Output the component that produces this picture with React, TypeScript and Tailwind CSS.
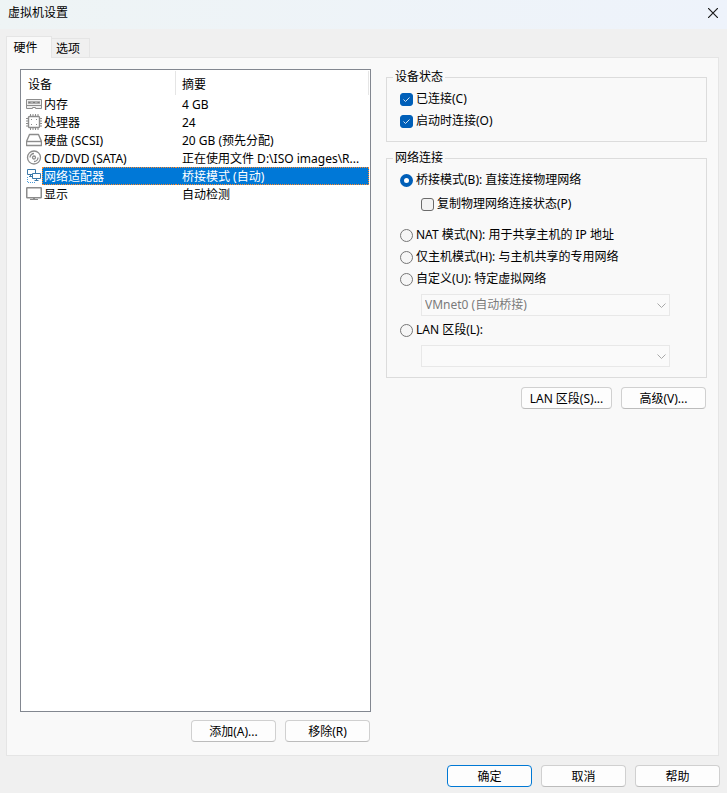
import { useState } from "react";
import type { ReactNode } from "react";

interface Device {
  id: string;
  name: string;
  summary: string;
  icon: ReactNode;
}

const ICON_PROPS = {
  width: 16,
  height: 16,
  viewBox: "0 0 16 16",
  fill: "none",
  stroke: "#8c8c8c",
  "aria-hidden": true,
} as const;

const DEVICES: Device[] = [
  {
    id: "memory",
    name: "内存",
    summary: "4 GB",
    icon: (
      <svg {...ICON_PROPS}>
        <path d="M.5 3.5h15v9H9.5v-1h-3v1h-6z" fill="#eeeeee" />
        <path d="M.5 9.5h15" />
        <path d="M2 5h12v3H2z" fill="#adadad" stroke="none" />
        <path d="M2.5 6.5h2M7 6.5h2M11.5 6.5h2" stroke="#7a7a7a" />
      </svg>
    ),
  },
  {
    id: "cpu",
    name: "处理器",
    summary: "24",
    icon: (
      <svg {...ICON_PROPS}>
        <rect x="2.5" y="2.5" width="11" height="11" rx="1" strokeWidth="1.4" />
        <path d="M4.5 0v2M7 0v2M9.5 0v2M12 0v2M4.5 14v2M7 14v2M9.5 14v2M12 14v2" />
        <path d="M0 4.5h2M0 7h2M0 9.5h2M0 12h2M14 4.5h2M14 7h2M14 9.5h2M14 12h2" />
        <path d="M5 5.5h1M10 5.5h1M10 10.5h1M5 10.5h1" />
      </svg>
    ),
  },
  {
    id: "disk",
    name: "硬盘 (SCSI)",
    summary: "20 GB (预先分配)",
    icon: (
      <svg {...ICON_PROPS} strokeWidth="1.4">
        <path d="M3.5 2.5h9l3 7v4H.5v-4z" strokeLinejoin="round" />
        <path d="M.5 9.5h15" />
      </svg>
    ),
  },
  {
    id: "cd",
    name: "CD/DVD (SATA)",
    summary: "正在使用文件 D:\\ISO images\\R...",
    icon: (
      <svg {...ICON_PROPS} strokeWidth="1.3">
        <circle cx="8" cy="7.5" r="6.5" />
        <circle cx="8" cy="7.5" r="1.5" />
        <path d="M4 7.5a4 4 0 0 1 4-4M12 7.5a4 4 0 0 1-4 4" />
      </svg>
    ),
  },
  {
    id: "network",
    name: "网络适配器",
    summary: "桥接模式 (自动)",
    icon: (
      <svg {...ICON_PROPS} stroke="#3b78a8">
        <path d="M1.5 1.5h8v5h-8zM4.5 6.5v2M3 8.5h3" fill="#fff" />
        <path d="M6.5 5.5h8v5h-8z" fill="#fff" />
        <path d="M10.5 10.5v2M8.5 12.5h4" />
        <path d="M1.5 9v5.5h8" stroke="#4a9bd8" strokeDasharray="1 1" />
      </svg>
    ),
  },
  {
    id: "display",
    name: "显示",
    summary: "自动检测",
    icon: (
      <svg {...ICON_PROPS}>
        <rect x=".75" y="1.75" width="14.5" height="10" rx=".5" strokeWidth="1.5" />
        <path d="M7 12.5h2M4 13.5h8" />
      </svg>
    ),
  },
];

function Checkbox({ label, defaultChecked }: { label: string; defaultChecked?: boolean }) {
  return (
    <label className="flex h-[22px] items-center gap-[3px]">
      <span className="grid shrink-0 place-items-center">
        <input
          type="checkbox"
          defaultChecked={defaultChecked}
          className="peer col-start-1 row-start-1 size-[13px] appearance-none rounded-[3px] border border-[#6b6b6b] bg-[#f3f3f3] checked:border-[#005fb8] checked:bg-[#005fb8]"
        />
        <svg
          width="13"
          height="13"
          viewBox="0 0 13 13"
          fill="none"
          stroke="#d5e5f4"
          className="pointer-events-none invisible col-start-1 row-start-1 peer-checked:visible"
        >
          <path d="M3.5 6.5l2 2 4-4" />
        </svg>
      </span>
      {label}
    </label>
  );
}

function Radio({
  label,
  value,
  mode,
  onSelect,
}: {
  label: string;
  value: string;
  mode: string;
  onSelect: (value: string) => void;
}) {
  return (
    <label className="flex h-[22px] items-center gap-[3px]">
      <input
        type="radio"
        name="network-mode"
        value={value}
        checked={mode === value}
        onChange={() => onSelect(value)}
        className="size-[13px] shrink-0 appearance-none rounded-full border border-[#767676] bg-[#f6f6f6] checked:border-4 checked:border-[#005fb8] checked:bg-white"
      />
      {label}
    </label>
  );
}

function Combo({ label, option }: { label: string; option?: string }) {
  return (
    <div className="ml-[21px] grid items-center">
      <select
        disabled
        aria-label={label}
        className="col-start-1 row-start-1 h-[22px] w-full appearance-none border border-[#e8e8e8] bg-[#fafafa] px-[3px] text-[#7a7a7a]"
      >
        {option && <option>{option}</option>}
      </select>
      <svg
        width="9"
        height="5"
        viewBox="0 0 9 5"
        fill="none"
        stroke="#a8a8a8"
        className="pointer-events-none col-start-1 row-start-1 mr-1 justify-self-end"
      >
        <path d="M.5.5l4 4 4-4" />
      </svg>
    </div>
  );
}

function Button({ children, primary, wide }: { children: ReactNode; primary?: boolean; wide?: boolean }) {
  return (
    <button
      type="button"
      className={`h-[22px] rounded-[4px] border bg-[#fdfdfd] pt-px text-center ${wide ? "w-[91px]" : "w-[85px]"} ${
        primary ? "border-[#0078d4]" : "border-[#d0d0d0] border-b-[#bcbcbc]"
      }`}
    >
      {children}
    </button>
  );
}

export default function App() {
  const [selected, setSelected] = useState("network");
  const [mode, setMode] = useState("bridged");

  return (
    <div className="flex min-h-screen flex-col bg-[#f0f0f0] font-['Noto_Sans','Noto_Sans_CJK_SC',sans-serif] text-[12px] leading-[16px] text-black">
      <header className="flex h-[29px] items-start justify-between bg-linear-to-r from-[#eef4f5] to-[#eef3fb] pt-[5px] pr-[9px] pl-2">
        <h1>虚拟机设置</h1>
        <button type="button" aria-label="关闭" className="mt-[3px]">
          <svg width="10" height="10" viewBox="0 0 10 10" fill="none" stroke="#1a1a1a" strokeWidth="1.2">
            <path d="M0 0l10 10M10 0L0 10" />
          </svg>
        </button>
      </header>

      <main className="flex flex-1 flex-col pt-[7px] pr-2 pb-[6px] pl-[6px]">
        <div role="tablist" className="z-10 -mb-px flex items-end">
          <button
            type="button"
            role="tab"
            aria-selected="true"
            className="h-[22px] w-[46px] border border-b-0 border-[#e5e5e5] bg-[#f9f9f9] pr-[7px]"
          >
            硬件
          </button>
          <button
            type="button"
            role="tab"
            aria-selected="false"
            className="h-5 w-[38px] border border-l-0 border-[#e5e5e5] bg-[#f0f0f0] pt-px pr-[5px]"
          >
            选项
          </button>
        </div>

        <div className="grid flex-1 grid-cols-[351fr_321fr] gap-[15px] border border-[#e5e5e5] bg-[#f9f9f9] pt-[11px] pr-[11px] pb-[13px] pl-[13px]">
          <section className="flex min-w-0 flex-col gap-2">
            <div className="flex-1 border border-[#828790] bg-white pr-px">
              <table className="w-full table-fixed border-collapse">
                <thead>
                  <tr className="h-[25px] text-left">
                    <th scope="col" className="w-[155px] p-0 font-normal">
                      <div className="mt-px h-6 border-r border-[#e5e5e5] pt-[6px] pl-[7px]">设备</div>
                    </th>
                    <th scope="col" className="p-0 font-normal">
                      <div className="mt-px h-6 border-r border-[#e5e5e5] pt-[6px] pl-[6px]">摘要</div>
                    </th>
                  </tr>
                </thead>
                <tbody>
                  {DEVICES.map((device) => {
                    const active = selected === device.id;
                    const tone = active
                      ? "border-dotted border-[#ff8728] bg-[#0078d7] text-white"
                      : "border-transparent";
                    return (
                      <tr
                        key={device.id}
                        aria-selected={active}
                        onClick={() => setSelected(device.id)}
                        className="h-[18px] whitespace-nowrap leading-[18px]"
                      >
                        <td className="p-0">
                          <div className="flex items-center pl-[5px]">
                            {device.icon}
                            <span className={`h-[18px] flex-1 border-y border-l pl-px ${tone}`}>{device.name}</span>
                          </div>
                        </td>
                        <td className="p-0">
                          <div className={`h-[18px] overflow-hidden border-y border-r pl-[6px] ${tone}`}>
                            {device.summary}
                          </div>
                        </td>
                      </tr>
                    );
                  })}
                </tbody>
              </table>
            </div>
            <div className="flex justify-end gap-[9px] pr-px">
              <Button>添加(A)...</Button>
              <Button>移除(R)</Button>
            </div>
          </section>

          <section className="flex min-w-0 flex-col">
            <fieldset className="border border-[#dcdcdc] pt-[3px] pb-[9px] pl-[13px]">
              <legend className="ml-[-7px] px-[2px]">设备状态</legend>
              <Checkbox label="已连接(C)" defaultChecked />
              <Checkbox label="启动时连接(O)" defaultChecked />
            </fieldset>

            <fieldset className="mt-2 border border-[#dcdcdc] pt-[3px] pr-9 pb-[10px] pl-[13px]">
              <legend className="ml-[-7px] px-[2px]">网络连接</legend>
              <Radio label="桥接模式(B): 直接连接物理网络" value="bridged" mode={mode} onSelect={setMode} />
              <div className="mt-[2px] mb-[9px] ml-[21px]">
                <Checkbox label="复制物理网络连接状态(P)" />
              </div>
              <Radio label="NAT 模式(N): 用于共享主机的 IP 地址" value="nat" mode={mode} onSelect={setMode} />
              <Radio label="仅主机模式(H): 与主机共享的专用网络" value="host" mode={mode} onSelect={setMode} />
              <div className="mb-1">
                <Radio label="自定义(U): 特定虚拟网络" value="custom" mode={mode} onSelect={setMode} />
              </div>
              <Combo label="虚拟网络" option="VMnet0 (自动桥接)" />
              <div className="mt-[3px] mb-1">
                <Radio label="LAN 区段(L):" value="lan" mode={mode} onSelect={setMode} />
              </div>
              <Combo label="LAN 区段" />
            </fieldset>

            <div className="mt-[9px] flex justify-end gap-[9px] pr-px">
              <Button wide>LAN 区段(S)...</Button>
              <Button>高级(V)...</Button>
            </div>
          </section>
        </div>

        <footer className="mt-[9px] -mr-px flex justify-end gap-[9px]">
          <Button primary>确定</Button>
          <Button>取消</Button>
          <Button>帮助</Button>
        </footer>
      </main>
    </div>
  );
}
